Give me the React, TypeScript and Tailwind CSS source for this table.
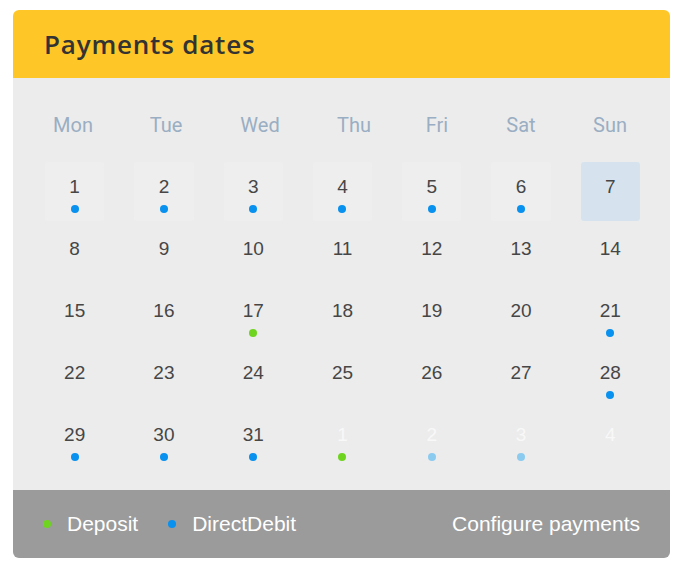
const days = ['Mon', 'Tue', 'Wed', 'Thu', 'Fri', 'Sat', 'Sun'];

type Cell = {
  n: number;
  dot?: 'blue' | 'green' | 'lightblue';
  outside?: boolean;
  boxed?: boolean;
  today?: boolean;
};

const blue = new Set([1, 2, 3, 4, 5, 6, 21, 28, 29, 30, 31]);
const green = new Set([17]);

const cells: Cell[] = [];
for (let i = 1; i <= 31; i++) {
  cells.push({
    n: i,
    dot: blue.has(i) ? 'blue' : green.has(i) ? 'green' : undefined,
    boxed: i <= 6,
    today: i === 7,
  });
}
cells.push({ n: 1, dot: 'green', outside: true });
cells.push({ n: 2, dot: 'lightblue', outside: true });
cells.push({ n: 3, dot: 'lightblue', outside: true });
cells.push({ n: 4, outside: true });

const dotClass = {
  blue: 'bg-[#0891ee]',
  green: 'bg-[#6fd41f]',
  lightblue: 'bg-[#8ccbf0]',
};

function DayCell({ cell }: { cell: Cell }) {
  const bg = cell.today
    ? 'bg-[#d6e3ee]'
    : cell.boxed
      ? 'bg-[#eeeeee]'
      : '';
  return (
    <div className={`h-[59px] rounded-[3px] flex flex-col items-center pt-[14px] ${bg}`}>
      <span
        className={`text-[19px] leading-[22px] ${cell.outside ? 'text-[#f8f8f8]' : 'text-[#464646]'}`}
      >
        {cell.n}
      </span>
      {cell.dot && <span className={`mt-[7px] w-[8px] h-[8px] rounded-full ${dotClass[cell.dot]}`} />}
    </div>
  );
}

export default function App() {
  return (
    <div className="w-[678px] h-[580px] bg-white pt-[10px] pl-[13px]">
      <div
        className="w-[657px] rounded-[6px] overflow-hidden"
        style={{ fontFamily: '"Liberation Sans", Arial, sans-serif' }}
      >
        <div className="h-[68px] bg-[#fec627] flex items-center pl-[31px]">
          <h1
            className="text-[26px] font-semibold text-[#333333] tracking-[0.8px]"
            style={{ fontFamily: '"Open Sans", sans-serif' }}
          >
            Payments dates
          </h1>
        </div>

        <div className="bg-[#ececec] pt-[27px] pb-[21px]">
          <div
            className="ml-[15px] grid grid-cols-[90px_96px_92px_96px_70px_98px_80px] h-[40px] items-center"
            style={{ fontFamily: 'Roboto, sans-serif' }}
          >
            {days.map((d) => (
              <div key={d} className="text-center text-[20px] text-[#9aaec3]">
                {d}
              </div>
            ))}
          </div>
          <div className="mt-[17px] ml-[32px] mr-[30px] grid grid-cols-7 gap-x-[30px] gap-y-[3px]">
            {cells.map((c, i) => (
              <DayCell key={i} cell={c} />
            ))}
          </div>
        </div>

        <div className="h-[68px] bg-[#9b9b9b] flex items-center pl-[30px] pr-[30px] text-white text-[21px]">
          <span className="w-[8px] h-[8px] rounded-full bg-[#6fd41f]" />
          <span className="ml-[16px]">Deposit</span>
          <span className="ml-[30px] w-[8px] h-[8px] rounded-full bg-[#0891ee]" />
          <span className="ml-[16px]">DirectDebit</span>
          <span className="ml-auto">Configure payments</span>
        </div>
      </div>
    </div>
  );
}
